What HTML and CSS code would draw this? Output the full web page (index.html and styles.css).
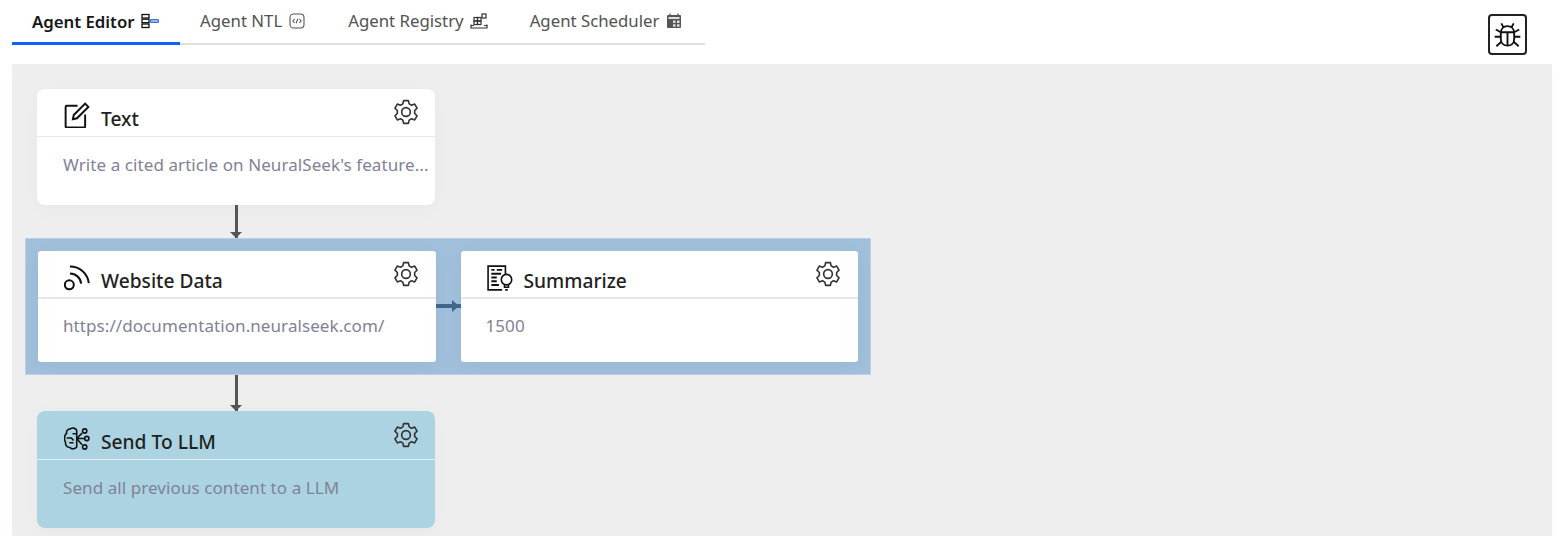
FILE: index.html
```html
<!DOCTYPE html>
<html lang="en">
<head>
	<meta charset="UTF-8">
	<title>Agent Editor</title>
	<link rel="stylesheet" href="styles.css">
</head>
<body>
	<header class="topbar">
		<nav class="tabs">
			<a class="tab active">Agent Editor
				<svg class="tab-icon" viewBox="0 0 18 16" fill="none" stroke="#111" stroke-width="1.300"><rect x="1" y="1.500" width="7" height="3.500"/><rect x="1" y="6.200" width="7" height="3.500"/><rect x="1" y="11" width="7" height="3.500"/><rect x="9.500" y="6.600" width="8" height="2.800" rx="1" stroke="#3a6fd8" fill="#bcd0f5"/></svg>
			</a>
			<a class="tab">Agent NTL
				<svg class="tab-icon" viewBox="0 0 16 16" fill="none" stroke="#555" stroke-width="1.100"><rect x="1" y="1" width="14" height="14" rx="3.500"/><path d="M5.600 6 3.900 8l1.700 2M10.400 6l1.700 2-1.700 2M8.800 5.800 7.200 10.200"/></svg>
			</a>
			<a class="tab">Agent Registry
				<svg class="tab-icon" viewBox="0 0 18 16" fill="none" stroke="#333" stroke-width="1.200"><rect x="4" y="4.500" width="3.500" height="3.500"/><rect x="7.500" y="4.500" width="3.500" height="3.500"/><rect x="4" y="8" width="3.500" height="3.500"/><rect x="7.500" y="8" width="3.500" height="3.500"/><rect x="12" y="1" width="4" height="4"/><path d="M1 11.500v3.500h16v-3.500M1 12.500h3M14 12.500h3"/></svg>
			</a>
			<a class="tab">Agent Scheduler
				<svg class="tab-icon" viewBox="0 0 16 16"><rect x="1" y="2" width="14" height="13" rx="1" fill="#555"/><path d="M4 .5v3M12 .5v3" stroke="#555" stroke-width="1.300"/><path d="M2.500 4h11v2h-11z M7 7.500h2.500v2.500H7z M11 7.500h2.500v2.500H11z M7 11.200h2.500v2.500H7z M11 11.200h2.500v2.500H11z" fill="#ddd"/></svg>
			</a>
		</nav>
		<button class="bug-btn" aria-label="Debug">
			<svg viewBox="0 0 26 26" fill="none" stroke="#111" stroke-width="1.700"><path d="M7 12c0-4 2.500-6.500 6-6.500s6 2.500 6 6.500v5c0 3.500-2.500 6-6 6s-6-2.500-6-6z"/><path d="M7 11h12M13 11v12M9.500 6.800 7.500 3M16.500 6.800 18.500 3M7 11 2.500 8.500M19 11l4.500-2.500M7 15H1.500M19 15h5.500M7.500 19.500 3 23.500M18.500 19.500l4.500 4"/></svg>
		</button>
	</header>

	<main class="canvas">
		<section class="card">
			<div class="card-head">
				<svg class="node-icon" viewBox="0 0 24 24" fill="none" stroke="#111" stroke-width="1.800"><path d="M12.500 3.500H2.500a1 1 0 0 0-1 1v18a1 1 0 0 0 1 1h16a1 1 0 0 0 1-1v-11"/><path d="M9 12 19.500 1.500l3 3L12 15l-3.800.8z"/></svg>
				<h2>Text</h2>
				<svg class="gear" viewBox="0 0 24 24"><use href="#gear"/></svg>
			</div>
			<p class="card-body">Write a cited article on NeuralSeek's feature...</p>
		</section>

		<div class="arrow-down"></div>

		<div class="group">
			<section class="card">
				<div class="card-head">
					<svg class="node-icon" viewBox="1 2.500 22 21.500" fill="none" stroke="#111" stroke-width="1.700"><circle cx="5.500" cy="19" r="3.800"/><path d="M6 9.500c5 0 9 3.500 9.500 8.500M6 3.500c8.500 0 15 6 16 14"/></svg>
					<h2>Website Data</h2>
					<svg class="gear" viewBox="0 0 24 24"><use href="#gear"/></svg>
				</div>
				<p class="card-body">https://documentation.neuralseek.com/</p>
			</section>
			<div class="arrow-right"></div>
			<section class="card">
				<div class="card-head">
					<svg class="node-icon" viewBox="0 0 24 24" fill="none" stroke="#111" stroke-width="1.500"><path d="M14 23H1V1h16v8"/><path d="M4 4.500h3M9 4.500h5M4 8h9M4 11.500h5M4 15h5M4 18.500h7" stroke-width="1.800"/><circle cx="18" cy="13.500" r="4.800"/><path d="M16.200 18.500v2h3.600v-2M16.800 23h2.400"/></svg>
					<h2>Summarize</h2>
					<svg class="gear" viewBox="0 0 24 24"><use href="#gear"/></svg>
				</div>
				<p class="card-body">1500</p>
			</section>
		</div>

		<div class="arrow-down tall"></div>

		<section class="card llm">
			<div class="card-head">
				<svg class="node-icon" viewBox="0 1 24.500 22" fill="none" stroke="#111" stroke-width="1.500"><path d="M12 4c-1-2.500-4-3-6-1.500C3.500 2.500 2 4.500 2.500 6.500 0 8.500 0 13 1.500 15c-.5 3 1.500 5 4 5 2 2 5 1.500 6.500-.5z"/><path d="M12 7H8M2.500 11H7l2 2.500M5 15.500h4M12 11.500l5-5M12 11.500h7.500M12 11.500l5 6"/><circle cx="19.500" cy="4.500" r="2"/><circle cx="21.500" cy="11.500" r="2"/><circle cx="19.500" cy="19.500" r="2"/></svg>
				<h2>Send To LLM</h2>
				<svg class="gear" viewBox="0 0 24 24"><use href="#gear"/></svg>
			</div>
			<p class="card-body">Send all previous content to a LLM</p>
		</section>
	</main>

	<svg class="defs" aria-hidden="true">
		<symbol id="gear" viewBox="0 0 24 24">
			<g fill="none" stroke="#333" stroke-width="1.500" stroke-linejoin="round">
				<path d="M9.800 1.500h4.400l.7 3 2.200 1.200 2.900-1 2.200 3.800-2.200 2.100v2.800l2.200 2.100-2.200 3.800-2.900-1-2.200 1.200-.7 3H9.800l-.7-3-2.200-1.200-2.900 1-2.200-3.800 2.200-2.100v-2.800L1.800 8.500 4 4.700l2.900 1 2.200-1.200z"/>
				<circle cx="12" cy="12" r="4"/>
			</g>
		</symbol>
	</svg>
</body>
</html>
```

FILE: styles.css
```css
* {
	margin: 0;
	padding: 0;
	box-sizing: border-box;
}
body {
	font-family: "Noto Sans", "Open Sans", sans-serif;
	background: #fff;
	color: #161616;
	padding: 0 9px 0 12px;
}
.topbar {
	display: flex;
	justify-content: space-between;
	height: 64px;
}
.tabs {
	display: flex;
	align-self: flex-start;
	height: 45px;
	border-bottom: 2px solid #e0e0e0;
}
.tab {
	display: flex;
	align-items: center;
	gap: 6px;
	height: 45px;
	padding: 0 22px 4px 20px;
	font-size: 16.800px;
	color: #525252;
	white-space: nowrap;
}
.tab.active {
	width: 168px;
	padding: 0 0 0 20px;
	font-weight: 600;
	color: #161616;
	border-bottom: 3px solid #0f62fe;
}
.tab-icon {
	width: 18px;
	height: 16px;
}
.bug-btn {
	width: 39px;
	height: 41px;
	margin: 14px 25px 0 0;
	display: flex;
	align-items: center;
	justify-content: center;
	background: #fff;
	border: 2px solid #222;
	border-radius: 4px;
}
.bug-btn svg {
	width: 29px;
	height: 29px;
}
.canvas {
	height: 472px;
	padding: 25px 25px 8px 25px;
	background: #eee;
	box-shadow: 0 6px 14px rgba(0, 0, 0, 0.02);
}
.card {
	width: 398px;
	height: 116px;
	background: #fff;
	border-radius: 8px;
	box-shadow: 0 4px 20px rgba(0, 0, 0, 0.03);
}
.card-head {
	display: flex;
	align-items: center;
	height: 48px;
	padding: 12px 16px 0 27px;
	border-bottom: 1px solid #e6e6ee;
}
.card-head h2 {
	margin-left: 11px;
	font-size: 19.200px;
	font-weight: 500;
	color: #222;
}
.node-icon {
	width: 26px;
	height: 26px;
	margin-top: -8px;
}
.gear {
	width: 26px;
	height: 26px;
	margin: -13px 0 0 auto;
}
.card-body {
	padding: 16px 2px 0 26px;
	font-size: 17px;
	letter-spacing: 0.08px;
	line-height: 24px;
	color: #7f8296;
	white-space: nowrap;
	overflow: hidden;
}
.arrow-down {
	position: relative;
	width: 3px;
	height: 33px;
	margin-left: 198px;
	background: #555;
}
.arrow-down.tall {
	height: 36px;
}
.arrow-down::after {
	content: "";
	position: absolute;
	left: -5px;
	bottom: 0;
	border-left: 6.500px solid transparent;
	border-right: 6.500px solid transparent;
	border-top: 6px solid #555;
}
.group {
	display: flex;
	align-items: flex-start;
	width: 846px;
	height: 137px;
	margin-left: -12px;
	padding: 12px;
	background: #a0bfdb;
	border: 1px solid #b8cfe3;
}
.group .card {
	width: 398px;
	height: 111px;
	border-radius: 3px;
}
.group .card-head {
	padding: 12px 17px 0 26px;
	border-bottom-width: 2px;
}
.group .node-icon,
.llm .node-icon {
	margin-top: -4px;
}
.group .gear {
	margin-top: -13px;
}
.group .card-body {
	padding-top: 15px;
	padding-left: 25px;
}
.arrow-right {
	flex: none;
	position: relative;
	width: 25px;
	height: 4px;
	margin-top: 53px;
	background: #41668c;
}
.arrow-right::after {
	content: "";
	position: absolute;
	right: 2px;
	top: -4.500px;
	border-top: 6.500px solid transparent;
	border-bottom: 6.500px solid transparent;
	border-left: 7px solid #41668c;
}
.llm {
	background: #acd3e1;
	height: 117px;
}
.llm .card-head {
	height: 49px;
	border-bottom-color: #e4f1f6;
}
.defs {
	display: none;
}
```
